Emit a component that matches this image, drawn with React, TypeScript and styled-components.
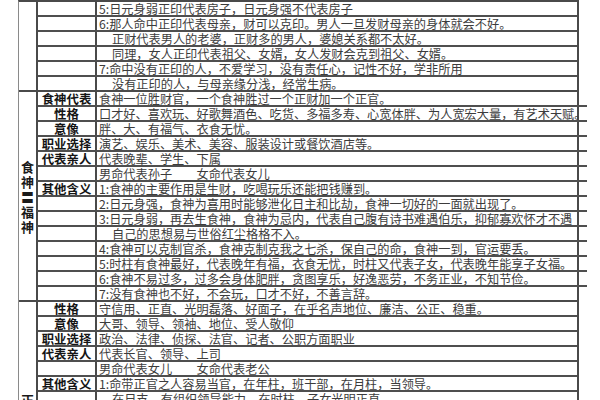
import React from 'react';
import styled, { createGlobalStyle } from 'styled-components';

const GlobalStyle = createGlobalStyle`
  html, body {
    margin: 0;
    padding: 0;
    background: #ffffff;
  }
  body {
    font-family: "Noto Sans CJK SC", "Noto Sans", sans-serif;
  }
`;

interface RowData {
  label?: string;
  text: string;
  indent?: boolean;
}

interface SectionData {
  title: string;
  rows: RowData[];
}

const sections: SectionData[] = [
  {
    title: '',
    rows: [
      { text: '5:日元身弱正印代表房子，日元身强不代表房子' },
      { text: '6:那人命中正印代表母亲，财可以克印。男人一旦发财母亲的身体就会不好。' },
      { text: '正财代表男人的老婆，正财多的男人，婆媳关系都不太好。', indent: true },
      { text: '同理，女人正印代表祖父、女婿，女人发财会克到祖父、女婿。', indent: true },
      { text: '7:命中没有正印的人，不爱学习，没有责任心，记性不好，学非所用' },
      { text: '没有正印的人，与母亲缘分浅，经常生病。', indent: true },
    ],
  },
  {
    title: '食神〓福神',
    rows: [
      { label: '食神代表', text: '食神一位胜财官，一个食神胜过一个正财加一个正官。' },
      {
        label: '性格',
        text: '口才好、喜欢玩、好歌舞酒色、吃货、多福多寿、心宽体胖、为人宽宏大量，有艺术天赋。',
      },
      { label: '意像', text: '胖、大、有福气、衣食无忧。' },
      { label: '职业选择', text: '演艺、娱乐、美术、美容、服装设计或餐饮酒店等。' },
      { label: '代表亲人', text: '代表晚辈、学生、下属' },
      { text: '男命代表孙子　　女命代表女儿' },
      { label: '其他含义', text: '1:食神的主要作用是生财，吃喝玩乐还能把钱赚到。' },
      { text: '2:日元身强，食神为喜用时能够泄化日主和比劫，食神一切好的一面就出现了。' },
      {
        text: '3:日元身弱，再去生食神，食神为忌内，代表自己腹有诗书难遇伯乐，抑郁寡欢怀才不遇',
      },
      { text: '自己的思想易与世俗红尘格格不入。', indent: true },
      { text: '4:食神可以克制官杀，食神克制克我之七杀，保自己的命，食神一到，官运要丢。' },
      {
        text: '5:时柱有食神最好，代表晚年有福，衣食无忧，时柱又代表子女，代表晚年能享子女福。',
      },
      { text: '6:食神不易过多，过多会身体肥胖，贪图享乐，好逸恶劳，不务正业，不知节俭。' },
      { text: '7:没有食神也不好，不会玩，口才不好，不善言辞。' },
    ],
  },
  {
    title: '正官',
    rows: [
      { label: '性格', text: '守信用、正直、光明磊落、好面子，在乎名声地位、廉洁、公正、稳重。' },
      { label: '意像', text: '大哥、领导、领袖、地位、受人敬仰' },
      { label: '职业选择', text: '政治、法律、侦探、法官、记者、公职方面职业' },
      { label: '代表亲人', text: '代表长官、领导、上司' },
      { text: '男命代表女儿　　女命代表老公' },
      { label: '其他含义', text: '1:命带正官之人容易当官，在年柱，班干部，在月柱，当领导。' },
      { text: '在日支，有组织领导能力，在时柱，子女光明正直。', indent: true },
      { text: '2:日元身强，正官为喜用，能够管束自己，做事有分寸。' },
      { text: '3:日元身弱，正官为忌，压力大，做事畏首畏尾。' },
      { text: '4:正官不宜过多，过多则变为七杀。' },
      { text: '5:女命正官代表老公，正官清纯，夫妻和睦。' },
      { text: '6:男命正官代表女儿。' },
      { text: '7:没有正官的人，不服管束。' },
      { text: '' },
    ],
  },
];

const Table = styled.div`
  margin-left: 18px;
  width: 561px;
  border-top: 2px solid #4a4a4a;
  border-left: 1px solid #8a8a8a;
  border-right: 2px solid #4a4a4a;
  box-sizing: border-box;
`;

const Section = styled.div`
  display: grid;
  grid-template-columns: 19px 1fr;
  border-bottom: 2px solid #4a4a4a;
  &:last-child {
    border-bottom: none;
  }
`;

const SideCell = styled.div`
  border-right: 2px solid #4a4a4a;
  display: flex;
  align-items: center;
  justify-content: center;
`;

const SideText = styled.div`
  width: 14px;
  font-size: 13px;
  line-height: 15px;
  font-weight: 700;
  color: #1a1a1a;
  text-align: center;
  word-break: break-all;
`;

const Rows = styled.div`
  display: flex;
  flex-direction: column;
`;

const Row = styled.div`
  display: grid;
  grid-template-columns: 59px 1fr;
  height: 15px;
  box-sizing: border-box;
  border-bottom: 2px solid #4f4f4f;
  ${Section}:not(:last-child) &:last-child {
    border-bottom: none;
    height: 13px;
  }
`;

const Label = styled.div`
  border-right: 2px solid #4a4a4a;
  font-size: 12.4px;
  line-height: 15px;
  height: 13px;
  font-weight: 700;
  color: #151515;
  text-align: center;
  white-space: nowrap;
  overflow-x: clip;
`;

const Content = styled.div<{ $indent?: boolean }>`
  padding-left: ${p => (p.$indent ? '15px' : '2px')};
  font-size: 12.2px;
  line-height: 15px;
  height: 13px;
  color: #3c3c3c;
  white-space: nowrap;
  overflow-x: clip;
`;

export default function App() {
  return (
    <>
      <GlobalStyle />
      <Table>
        {sections.map((section, i) => (
          <Section key={i}>
            <SideCell>
              <SideText>{section.title}</SideText>
            </SideCell>
            <Rows>
              {section.rows.map((row, j) => (
                <Row key={j}>
                  <Label>{row.label}</Label>
                  <Content $indent={row.indent}>{row.text}</Content>
                </Row>
              ))}
            </Rows>
          </Section>
        ))}
      </Table>
    </>
  );
}
